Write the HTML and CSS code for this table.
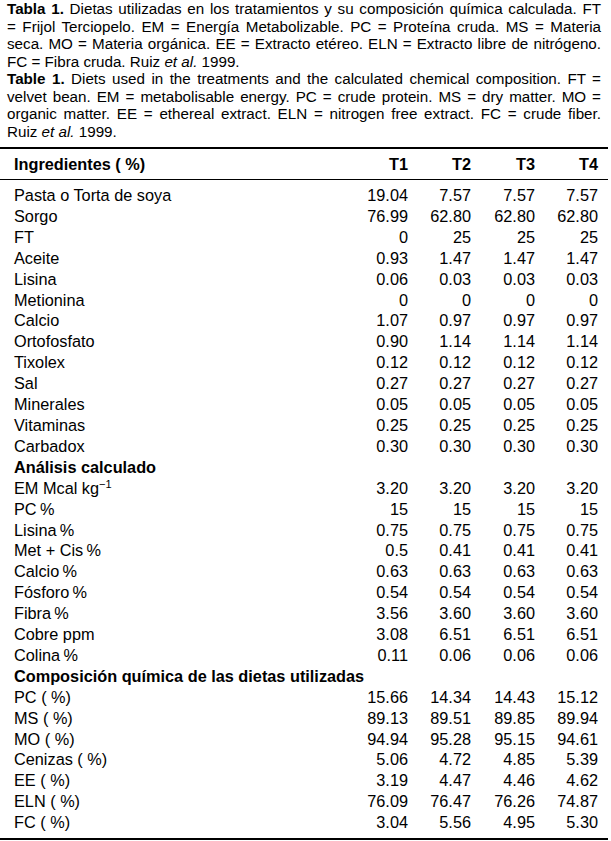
FILE: index.html
```html
<!DOCTYPE html>
<html lang="es">
<head>
<meta charset="utf-8">
<title>Tabla 1</title>
<link rel="stylesheet" href="styles.css">
</head>
<body>
<div class="page">
  <div class="caption">
    <p class="cap">
      <span class="ln"><b>Tabla 1.</b> Dietas utilizadas en los tratamientos y su composición química calculada. FT</span>
      <span class="ln">= Frijol Terciopelo. EM = Energía Metabolizable. PC = Proteína cruda. MS = Materia</span>
      <span class="ln">seca. MO = Materia orgánica. EE = Extracto etéreo. ELN = Extracto libre de nitrógeno.</span>
      <span class="ln last">FC = Fibra cruda. Ruiz <i>et al.</i> 1999.</span>
    </p>
    <p class="cap">
      <span class="ln"><b>Table 1.</b> Diets used in the treatments and the calculated chemical composition. FT =</span>
      <span class="ln">velvet bean. EM = metabolisable energy. PC = crude protein. MS = dry matter. MO =</span>
      <span class="ln">organic matter. EE = ethereal extract. ELN = nitrogen free extract. FC = crude fiber.</span>
      <span class="ln last">Ruiz <i>et al.</i> 1999.</span>
    </p>
  </div>

  <div class="tbl">
    <div class="row head">
      <span class="lbl">Ingredientes ( %)</span><span class="num">T1</span><span class="num">T2</span><span class="num">T3</span><span class="num">T4</span>
    </div>
    <div class="body">
      <div class="row"><span class="lbl">Pasta o Torta de soya</span><span class="num">19.04</span><span class="num">7.57</span><span class="num">7.57</span><span class="num">7.57</span></div>
      <div class="row"><span class="lbl">Sorgo</span><span class="num">76.99</span><span class="num">62.80</span><span class="num">62.80</span><span class="num">62.80</span></div>
      <div class="row"><span class="lbl">FT</span><span class="num">0</span><span class="num">25</span><span class="num">25</span><span class="num">25</span></div>
      <div class="row"><span class="lbl">Aceite</span><span class="num">0.93</span><span class="num">1.47</span><span class="num">1.47</span><span class="num">1.47</span></div>
      <div class="row"><span class="lbl">Lisina</span><span class="num">0.06</span><span class="num">0.03</span><span class="num">0.03</span><span class="num">0.03</span></div>
      <div class="row"><span class="lbl">Metionina</span><span class="num">0</span><span class="num">0</span><span class="num">0</span><span class="num">0</span></div>
      <div class="row"><span class="lbl">Calcio</span><span class="num">1.07</span><span class="num">0.97</span><span class="num">0.97</span><span class="num">0.97</span></div>
      <div class="row"><span class="lbl">Ortofosfato</span><span class="num">0.90</span><span class="num">1.14</span><span class="num">1.14</span><span class="num">1.14</span></div>
      <div class="row"><span class="lbl">Tixolex</span><span class="num">0.12</span><span class="num">0.12</span><span class="num">0.12</span><span class="num">0.12</span></div>
      <div class="row"><span class="lbl">Sal</span><span class="num">0.27</span><span class="num">0.27</span><span class="num">0.27</span><span class="num">0.27</span></div>
      <div class="row"><span class="lbl">Minerales</span><span class="num">0.05</span><span class="num">0.05</span><span class="num">0.05</span><span class="num">0.05</span></div>
      <div class="row"><span class="lbl">Vitaminas</span><span class="num">0.25</span><span class="num">0.25</span><span class="num">0.25</span><span class="num">0.25</span></div>
      <div class="row"><span class="lbl">Carbadox</span><span class="num">0.30</span><span class="num">0.30</span><span class="num">0.30</span><span class="num">0.30</span></div>
      <div class="row"><span class="sec">Análisis calculado</span></div>
      <div class="row"><span class="lbl">EM Mcal kg<sup>−1</sup></span><span class="num">3.20</span><span class="num">3.20</span><span class="num">3.20</span><span class="num">3.20</span></div>
      <div class="row"><span class="lbl">PC&#8201;%</span><span class="num">15</span><span class="num">15</span><span class="num">15</span><span class="num">15</span></div>
      <div class="row"><span class="lbl">Lisina&#8201;%</span><span class="num">0.75</span><span class="num">0.75</span><span class="num">0.75</span><span class="num">0.75</span></div>
      <div class="row"><span class="lbl">Met + Cis&#8201;%</span><span class="num">0.5</span><span class="num">0.41</span><span class="num">0.41</span><span class="num">0.41</span></div>
      <div class="row"><span class="lbl">Calcio&#8201;%</span><span class="num">0.63</span><span class="num">0.63</span><span class="num">0.63</span><span class="num">0.63</span></div>
      <div class="row"><span class="lbl">Fósforo&#8201;%</span><span class="num">0.54</span><span class="num">0.54</span><span class="num">0.54</span><span class="num">0.54</span></div>
      <div class="row"><span class="lbl">Fibra&#8201;%</span><span class="num">3.56</span><span class="num">3.60</span><span class="num">3.60</span><span class="num">3.60</span></div>
      <div class="row"><span class="lbl">Cobre ppm</span><span class="num">3.08</span><span class="num">6.51</span><span class="num">6.51</span><span class="num">6.51</span></div>
      <div class="row"><span class="lbl">Colina&#8201;%</span><span class="num">0.11</span><span class="num">0.06</span><span class="num">0.06</span><span class="num">0.06</span></div>
      <div class="row"><span class="sec">Composición química de las dietas utilizadas</span></div>
      <div class="row"><span class="lbl">PC ( %)</span><span class="num">15.66</span><span class="num">14.34</span><span class="num">14.43</span><span class="num">15.12</span></div>
      <div class="row"><span class="lbl">MS ( %)</span><span class="num">89.13</span><span class="num">89.51</span><span class="num">89.85</span><span class="num">89.94</span></div>
      <div class="row"><span class="lbl">MO ( %)</span><span class="num">94.94</span><span class="num">95.28</span><span class="num">95.15</span><span class="num">94.61</span></div>
      <div class="row"><span class="lbl">Cenizas ( %)</span><span class="num">5.06</span><span class="num">4.72</span><span class="num">4.85</span><span class="num">5.39</span></div>
      <div class="row"><span class="lbl">EE ( %)</span><span class="num">3.19</span><span class="num">4.47</span><span class="num">4.46</span><span class="num">4.62</span></div>
      <div class="row"><span class="lbl">ELN ( %)</span><span class="num">76.09</span><span class="num">76.47</span><span class="num">76.26</span><span class="num">74.87</span></div>
      <div class="row"><span class="lbl">FC ( %)</span><span class="num">3.04</span><span class="num">5.56</span><span class="num">4.95</span><span class="num">5.30</span></div>
    </div>
  </div>
</div>
</body>
</html>
```

FILE: styles.css
```css
html, body {
  margin: 0;
  padding: 0;
  background: #fff;
  color: #000;
}

.page {
  width: 611px;
  font-family: "Liberation Sans", Arial, sans-serif;
}

.caption {
  padding: 0 10px 0 7px;
}

.cap {
  margin: 0;
  font-size: 15.2px;
  line-height: 17.5px;
}

.ln {
  display: block;
  text-align: justify;
  text-align-last: justify;
}

.ln.last {
  text-align-last: left;
}

.tbl {
  margin: 7px 3px 0 0;
  border-top: 2px solid #000;
  border-bottom: 2px solid #000;
  font-size: 16.3px;
}

.row {
  display: grid;
  grid-template-columns: 1fr 63px 63px 64px 63px;
  padding: 0 10px 0 14px;
  height: 20.92px;
  line-height: 20.92px;
  white-space: nowrap;
}

.row.head {
  height: 30px;
  line-height: 30px;
  font-weight: bold;
  border-bottom: 1px solid #000;
}

.body {
  padding: 5px 0 4.5px;
}

.num {
  text-align: right;
}

.sec {
  grid-column: 1 / -1;
  font-weight: bold;
}

sup {
  font-size: 11px;
  line-height: 0;
  vertical-align: 6px;
}
```
